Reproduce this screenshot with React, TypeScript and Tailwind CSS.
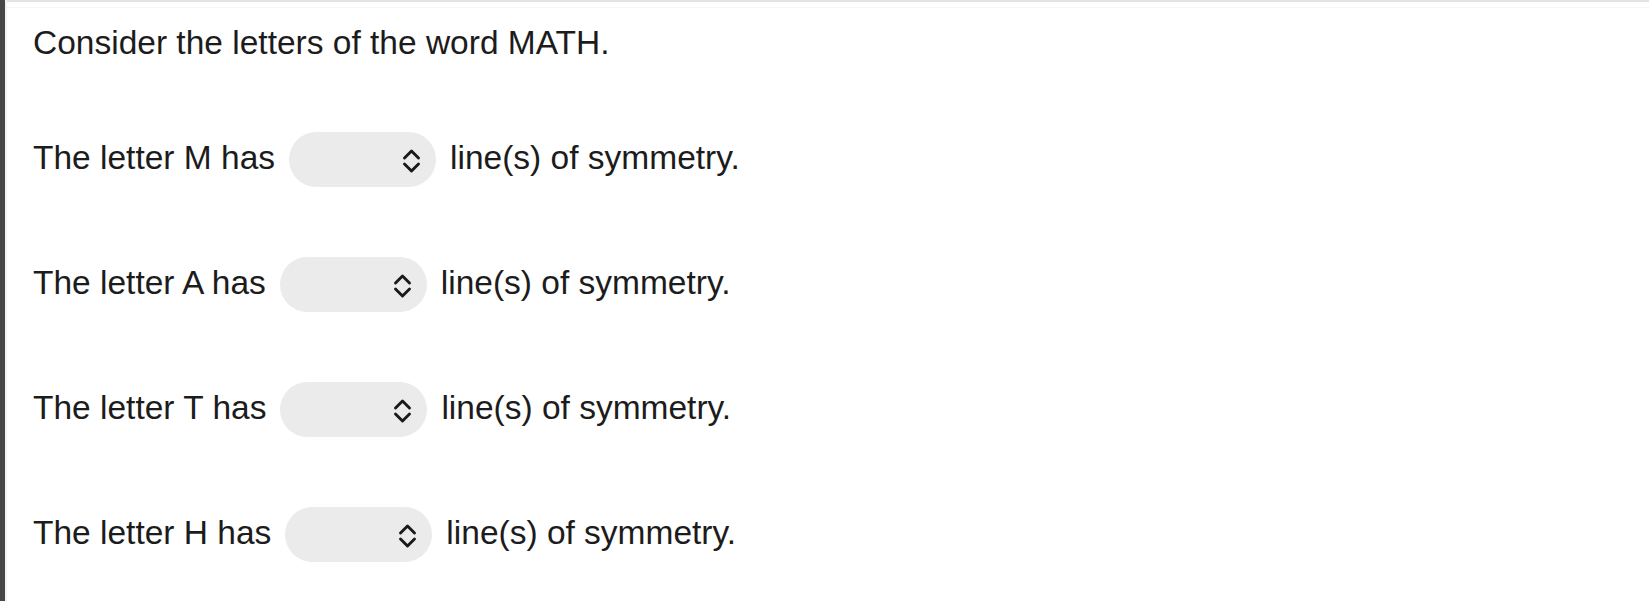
import React from 'react';

const letters = ['M', 'A', 'T', 'H'];

const Chevrons: React.FC = () => (
  <svg width="21" height="26" viewBox="0 0 21 26" fill="none" stroke="#1a1a1a" strokeWidth="2.9" strokeLinecap="round" strokeLinejoin="round">
    <path d="M3.5 10 L10.5 3 L17.5 10" />
    <path d="M3.5 16 L10.5 23 L17.5 16" />
  </svg>
);

const SymmetrySelect: React.FC<{ letter: string }> = ({ letter }) => (
  <div className="relative w-[147px] h-[55px] shrink-0">
    <select
      aria-label={`Lines of symmetry for ${letter}`}
      defaultValue=""
      className="appearance-none w-full h-full rounded-full bg-[#ebebeb] border-0 outline-none text-transparent"
    >
      <option value=""></option>
      <option value="0">0</option>
      <option value="1">1</option>
      <option value="2">2</option>
      <option value="3">3</option>
      <option value="4">4</option>
    </select>
    <div className="pointer-events-none absolute right-[14px] top-[16px]">
      <Chevrons />
    </div>
  </div>
);

export default function App() {
  return (
    <div
      className="flex w-full h-[601px] bg-white text-[#1c1c1c] text-[33.5px] leading-[38px]"
      style={{ fontFamily: '"Liberation Sans", Arial, Helvetica, sans-serif' }}
    >
      <div className="w-[5px] h-full bg-[#474747] shrink-0" />
      <div className="w-[2px] h-full bg-[#f3f3f3] shrink-0" />
      <div className="flex-1 border-t-[2px] border-[#e3e3e3]">
        <div className="mt-[5px] border-t border-[#f5f5f5] pl-[26px] pt-[16px] flex flex-col gap-[70px]">
          <p>Consider the letters of the word MATH.</p>
          {letters.map((l) => (
            <div key={l} className="flex items-center gap-[14px]">
              <span className="pb-[4px]">The letter {l} has</span>
              <SymmetrySelect letter={l} />
              <span className="pb-[4px]">line(s) of symmetry.</span>
            </div>
          ))}
        </div>
      </div>
    </div>
  );
}
